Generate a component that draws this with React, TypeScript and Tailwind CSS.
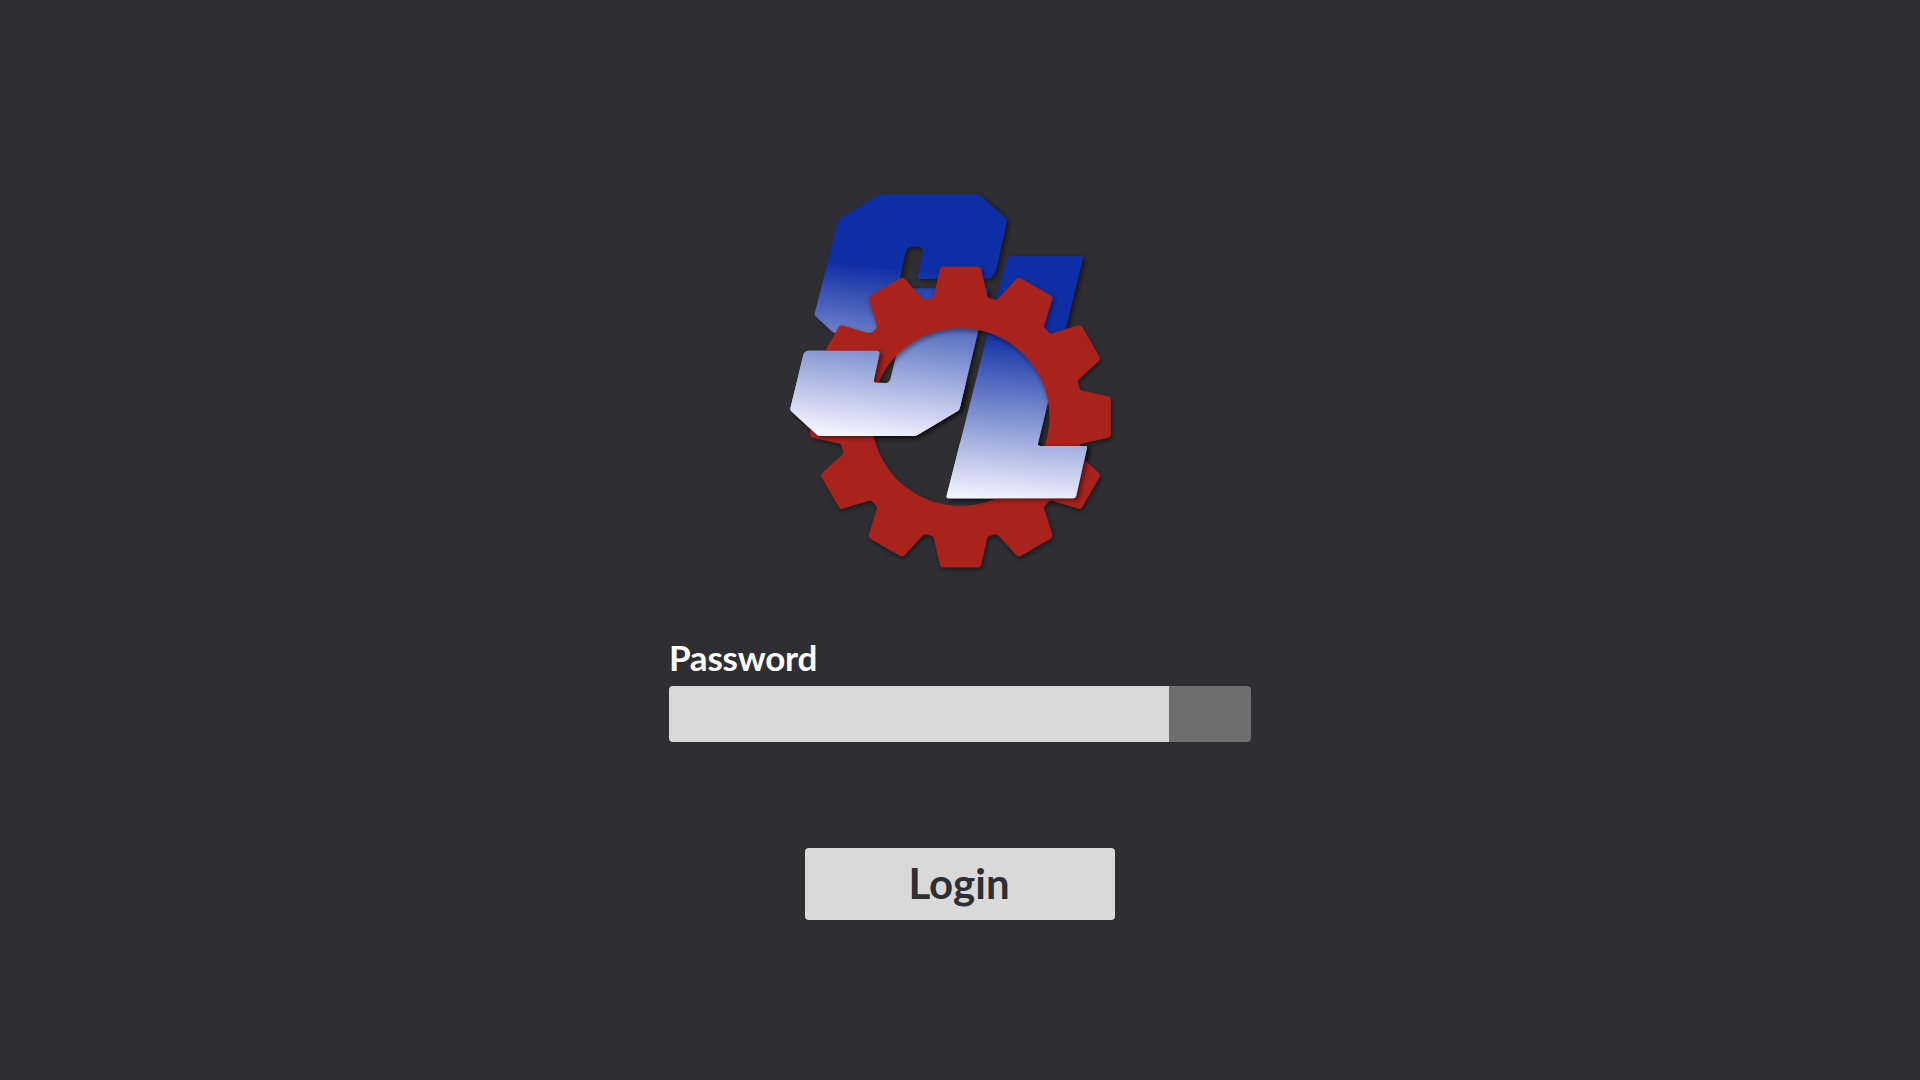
import React from "react";

type P = [number, number, number];

function rounded(points: P[]): string {
  const n = points.length;
  let d = "";
  for (let i = 0; i < n; i++) {
    const [x, y, r] = points[i];
    const [px, py] = points[(i + n - 1) % n];
    const [nx, ny] = points[(i + 1) % n];
    const l1 = Math.hypot(px - x, py - y);
    const l2 = Math.hypot(nx - x, ny - y);
    const t1 = Math.min(r, l1 / 2) / l1;
    const t2 = Math.min(r, l2 / 2) / l2;
    const ax = x + (px - x) * t1;
    const ay = y + (py - y) * t1;
    const bx = x + (nx - x) * t2;
    const by = y + (ny - y) * t2;
    d += `${i === 0 ? "M" : "L"}${ax.toFixed(1)} ${ay.toFixed(1)}Q${x} ${y} ${bx.toFixed(1)} ${by.toFixed(1)}`;
  }
  return d + "Z";
}

const CX = 571.5;
const CY = 711;

function gearPath(): string {
  const pts: P[] = [];
  const local: P[] = [
    [-81, -358, 6],
    [-60, -451, 9],
    [60, -451, 9],
    [81, -358, 6],
  ];
  for (let k = 0; k < 12; k++) {
    const a = (k * Math.PI) / 6;
    const c = Math.cos(a);
    const s = Math.sin(a);
    for (const [x, y, r] of local) {
      pts.push([CX + x * c - y * s, CY + x * s + y * c, r]);
    }
  }
  const R = 267;
  return (
    rounded(pts) +
    `M${CX - R} ${CY}A${R} ${R} 0 1 0 ${CX + R} ${CY}A${R} ${R} 0 1 0 ${CX - R} ${CY}Z`
  );
}

const S_PATH = rounded([
  [328, 43, 12],
  [628, 43, 12],
  [712, 118, 6],
  [672, 296, 24],
  [442, 296, 8],
  [462, 200, 18],
  [410, 200, 18],
  [383, 325, 10],
  [655, 325, 2],
  [568, 690, 6],
  [437, 768, 6],
  [145, 768, 6],
  [60, 690, 6],
  [103, 512, 14],
  [330, 512, 10],
  [310, 608, 8],
  [358, 610, 16],
  [395, 458, 2],
  [190, 458, 4],
  [133, 405, 4],
  [205, 118, 6],
]);

const L_PATH = rounded([
  [712, 228, 12],
  [940, 228, 8],
  [802, 798, 8],
  [952, 798, 6],
  [917, 955, 8],
  [528, 955, 8],
]);

function Logo() {
  return (
    <svg viewBox="0 0 1140 1200" width={380} height={400} className="block">
      <defs>
        <linearGradient id="sg" gradientUnits="userSpaceOnUse" x1={400} y1={268} x2={342} y2={772}>
          <stop offset="0" stopColor="#0e2ea4" />
          <stop offset="1" stopColor="#f1f3fe" />
        </linearGradient>
        <linearGradient id="lg" gradientUnits="userSpaceOnUse" x1={760} y1={465} x2={720} y2={958}>
          <stop offset="0" stopColor="#0e2ea4" />
          <stop offset="1" stopColor="#f1f3fe" />
        </linearGradient>
        <filter id="letter" filterUnits="userSpaceOnUse" x={0} y={0} width={1140} height={1200}>
          <feDropShadow dx={8} dy={5} stdDeviation={8} floodColor="#000" floodOpacity={0.55} />
        </filter>
        <filter id="gear" filterUnits="userSpaceOnUse" x={0} y={0} width={1140} height={1200}>
          <feDropShadow dx={4} dy={8} stdDeviation={8} floodColor="#000" floodOpacity={0.45} />
        </filter>
        <clipPath id="sfront">
          <path d="M0 506H350V612H640V1000H0Z" />
        </clipPath>
        <clipPath id="lfront">
          <path d="M400 790H1140V1100H400Z" />
        </clipPath>
      </defs>
      <g filter="url(#letter)">
        <path d={S_PATH} fill="url(#sg)" />
        <path d={L_PATH} fill="url(#lg)" />
      </g>
      <path d={gearPath()} fill="#a9241d" fillRule="evenodd" filter="url(#gear)" />
      <g clipPath="url(#sfront)">
        <path d={S_PATH} fill="url(#sg)" filter="url(#letter)" />
      </g>
      <g clipPath="url(#lfront)">
        <path d={L_PATH} fill="url(#lg)" filter="url(#letter)" />
      </g>
    </svg>
  );
}

export default function App() {
  return (
    <div className="min-h-screen bg-[#2f2e33] flex flex-col items-center pt-[180px] font-['Lato',sans-serif]">
      <Logo />
      <div className="w-[582px] mt-[52px]">
        <label className="block mb-[4px] text-white text-[35px] leading-[50px] font-bold tracking-[-0.25px]">Password</label>
        <div className="flex h-[56px] rounded-[4px] overflow-hidden">
          <input type="password" className="flex-1 min-w-0 bg-[#d9d9d9] outline-none" />
          <div className="w-[82px] bg-[#6e6e6e]" />
        </div>
      </div>
      <button className="mt-[106px] w-[310px] h-[72px] pb-[2px] pr-[2px] rounded-[4px] bg-[#d9d9d9] text-[#2f2e33] text-[42px] font-bold leading-none">
        Login
      </button>
    </div>
  );
}
